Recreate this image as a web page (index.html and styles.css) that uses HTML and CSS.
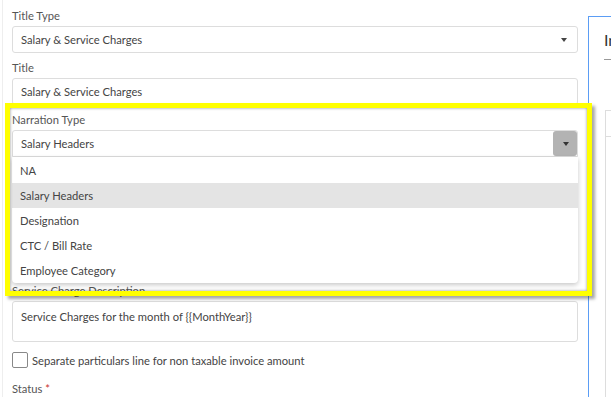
FILE: index.html
```html
<!DOCTYPE html>
<html>
	<head>
		<meta charset="utf-8">
		<title>Invoice Title</title>
		<link rel="stylesheet" href="styles.css">
	</head>
	<body>
		<div class="page">
			<form class="form">
				<div class="group">
					<label>Title Type</label>
					<div class="field select">Salary &amp; Service Charges<i class="caret"></i></div>
				</div>
				<div class="group">
					<label>Title</label>
					<div class="field">Salary &amp; Service Charges</div>
				</div>
				<div class="group narration">
					<label>Narration Type</label>
					<div class="combo">
						<div class="field select open">Salary Headers<span class="btn"><i class="caret"></i></span></div>
						<ul class="menu">
							<li>NA</li>
							<li class="active">Salary Headers</li>
							<li>Designation</li>
							<li>CTC / Bill Rate</li>
							<li>Employee Category</li>
						</ul>
					</div>
					<div class="highlight"></div>
				</div>
				<!-- fields under the open menu -->
				<div class="group">
					<div class="field covered"></div>
				</div>
				<div class="group">
					<label>Service Charge Description</label>
					<div class="field area">Service Charges for the month of {{MonthYear}}</div>
				</div>
				<div class="check">
					<span class="box"></span>
					<span>Separate particulars line for non taxable invoice amount</span>
				</div>
				<div class="group">
					<label>Status <span class="req">*</span></label>
				</div>
			</form>
			<aside class="panel">
				<h3 class="panel-title">Invoice Preview</h3>
				<div class="preview">
					<div class="preview-head"></div>
				</div>
			</aside>
		</div>
	</body>
</html>
```

FILE: styles.css
```css
* {
	margin: 0;
	padding: 0;
	box-sizing: border-box;
}

html,
body {
	height: 100%;
	overflow: hidden;
}

body {
	background: #fff;
	font-family: "Lato", "Noto Sans", sans-serif;
	font-size: 11.2px;
	color: #444;
}

ul {
	list-style: none;
}

.page {
	display: flex;
	align-items: flex-start;
	height: 100%;
	overflow: hidden;
	padding-left: 2px;
}

.form {
	flex: 0 0 576px;
	height: 100%;
	border-left: 1px solid #eee;
	padding: 8px 0 0 9px;
}

.group {
	margin-bottom: 7px;
}

.group label {
	display: block;
	line-height: 16px;
	margin-bottom: 2px;
	color: #555;
}

.req {
	color: #c9302c;
}

.field {
	position: relative;
	height: 27px;
	line-height: 25px;
	padding: 0 8px;
	border: 1px solid #ddd;
	border-radius: 3px;
	background: #fff;
	color: #444;
	white-space: nowrap;
}

.field.area {
	height: 41px;
	padding-top: 2px;
}

.field.covered {
	height: 112px;
}

.caret {
	position: absolute;
	right: 10px;
	top: 11px;
	width: 0;
	height: 0;
	border-left: 3.5px solid transparent;
	border-right: 3.5px solid transparent;
	border-top: 4px solid #444;
}

/* narration type, opened */
.narration {
	position: relative;
}

.combo {
	position: relative;
}

.field.open {
	border-radius: 3px 3px 0 0;
}

.btn {
	position: absolute;
	right: 0;
	top: 0;
	width: 24px;
	height: 25px;
	background: #b3b3b3;
	border-radius: 3px;
}

.btn .caret {
	right: 8px;
	top: 11px;
	border-top-color: #333;
}

.menu {
	position: absolute;
	left: 0;
	right: 0;
	top: 100%;
	z-index: 5;
	background: #fff;
	border-radius: 0 0 4px 4px;
	box-shadow: 0 2px 5px rgba(0, 0, 0, .22);
	padding-top: 1px;
}

.menu li {
	height: 25px;
	line-height: 25px;
	padding-left: 8px;
	color: #444;
}

.menu li.active {
	background: #e4e4e4;
}

.highlight {
	position: absolute;
	top: -9px;
	left: -7px;
	width: 587px;
	height: 193px;
	z-index: 10;
	border: 5px solid #ffff00;
	box-shadow: inset 0 0 3px rgba(0, 0, 0, .45), 3px 3px 3px rgba(0, 0, 0, .35);
	pointer-events: none;
}

.check {
	display: flex;
	align-items: center;
	gap: 4px;
	height: 22px;
	margin-bottom: 10px;
}

.check .box {
	width: 16px;
	height: 16px;
	border: 1px solid #888;
	border-radius: 2px;
	background: #fff;
}

/* right side */
.panel {
	flex: 1 0 300px;
	height: 100%;
	margin: 16px 0 0 10px;
	border-top: 1px solid #5b9df5;
	border-left: 1px solid #5b9df5;
	padding: 13px 0 0 15px;
	overflow: hidden;
}

.panel-title {
	font-size: 16px;
	font-weight: normal;
	line-height: 20px;
	color: #333;
	padding-bottom: 9px;
	border-bottom: 1px solid #999;
	white-space: nowrap;
}

.preview {
	margin: 50px 0 0 1px;
	height: 300px;
	border: 1px solid #ddd;
}

.preview-head {
	height: 26px;
	border-bottom: 1px solid #ddd;
}
```
